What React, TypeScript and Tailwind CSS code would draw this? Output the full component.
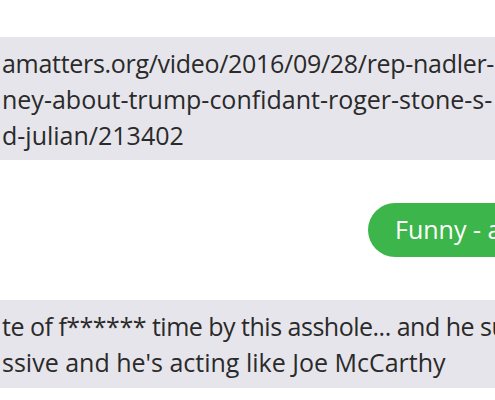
export default function App() {
  return (
    <div
      className="w-[495px] h-[400px] overflow-hidden bg-white text-[#2a2a2a]"
      style={{ fontFamily: '"Open Sans", "Noto Sans", sans-serif' }}
    >
      <div className="pt-[37px] flex flex-col">
        <div className="bg-[#e6e5eb] h-[123px] pl-[2px] pt-[8px] text-[25px] leading-[36px] whitespace-nowrap">
          <div className="tracking-[-0.3px]">amatters.org/video/2016/09/28/rep-nadler-</div>
          <div>ney-about-trump-confidant-roger-stone-s-</div>
          <div>d-julian/213402</div>
        </div>

        <div className="flex justify-end mt-[43px]">
          <div className="bg-[#3cb64a] h-[54px] w-[160px] -mr-[33px] rounded-full pl-[27px] flex items-center text-white text-[25px] whitespace-nowrap">
            Funny - a
          </div>
        </div>

        <div className="bg-[#e6e5eb] h-[88px] mt-[43px] pl-[2px] pt-[8px] text-[25px] leading-[36px] whitespace-nowrap">
          <div className="tracking-[-0.5px]">te of f****** time by this asshole... and he su</div>
          <div>ssive and he's acting like Joe McCarthy</div>
        </div>
      </div>
    </div>
  );
}
